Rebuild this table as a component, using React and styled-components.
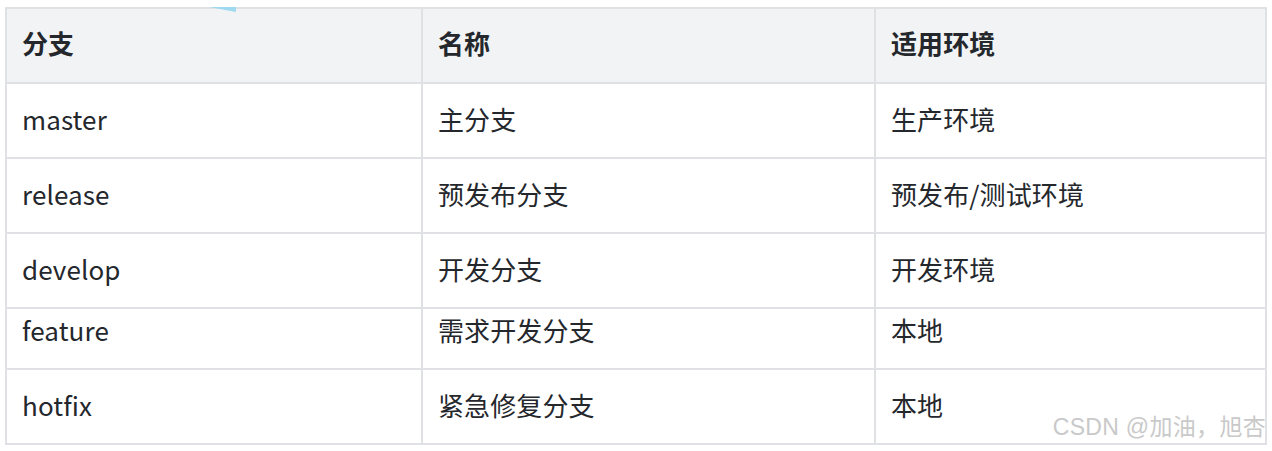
import React from 'react';
import styled, { createGlobalStyle } from 'styled-components';

const GlobalStyle = createGlobalStyle`
  body {
    margin: 0;
    background: #fff;
    font-family: "Noto Sans CJK SC", "Noto Sans", sans-serif;
  }
`;

const Page = styled.div`
  position: relative;
  width: 1272px;
  height: 451px;
  padding: 7px 0 0 5px;
  box-sizing: border-box;
  overflow: hidden;
`;

const Table = styled.div`
  display: grid;
  grid-template-columns: 416px 453px 391px;
  width: 1262px;
  border-top: 2px solid #e0e1e5;
  border-left: 2px solid #e0e1e5;
  box-sizing: border-box;
`;

const Cell = styled.div`
  display: flex;
  align-items: center;
  box-sizing: border-box;
  height: ${(p) => p.$h}px;
  padding: 0 0 ${(p) => p.$shift}px 15px;
  border-right: 2px solid #e0e1e5;
  border-bottom: 2px solid #e0e1e5;
  background: ${(p) => (p.$head ? '#f2f3f5' : '#fff')};
  color: #24272c;
  font-size: 26px;
  font-weight: ${(p) => (p.$head ? 700 : 400)};
  letter-spacing: 0.1px;
`;

const Sliver = styled.svg`
  position: absolute;
  left: 209px;
  top: 7px;
`;

const Watermark = styled.div`
  position: absolute;
  right: 6px;
  bottom: 9px;
  font-family: "Liberation Sans", "Noto Sans CJK SC", sans-serif;
  font-size: 23px;
  color: #c9c9c9;
  letter-spacing: 0.3px;
`;

const head = ['分支', '名称', '适用环境'];

const rows = [
  { cells: ['master', '主分支', '生产环境'], h: 75, shift: 5 },
  { cells: ['release', '预发布分支', '预发布/测试环境'], h: 75, shift: 5 },
  { cells: ['develop', '开发分支', '开发环境'], h: 75, shift: 5 },
  { cells: ['feature', '需求开发分支', '本地'], h: 61, shift: 18 },
  { cells: ['hotfix', '紧急修复分支', '本地'], h: 75, shift: 4 },
];

export default function App() {
  return (
    <>
      <GlobalStyle />
      <Page>
        <Table>
          {head.map((t) => (
            <Cell key={t} $head $h={75} $shift={7}>
              {t}
            </Cell>
          ))}
          {rows.map((r) =>
            r.cells.map((t, i) => (
              <Cell key={r.cells[0] + i} $h={r.h} $shift={r.shift}>
                {t}
              </Cell>
            ))
          )}
        </Table>
        <Sliver width="28" height="6" viewBox="0 0 28 6">
          <polygon points="0,0 27,0 27,5" fill="#9fd9ef" />
        </Sliver>
        <Watermark>CSDN @加油，旭杏</Watermark>
      </Page>
    </>
  );
}
